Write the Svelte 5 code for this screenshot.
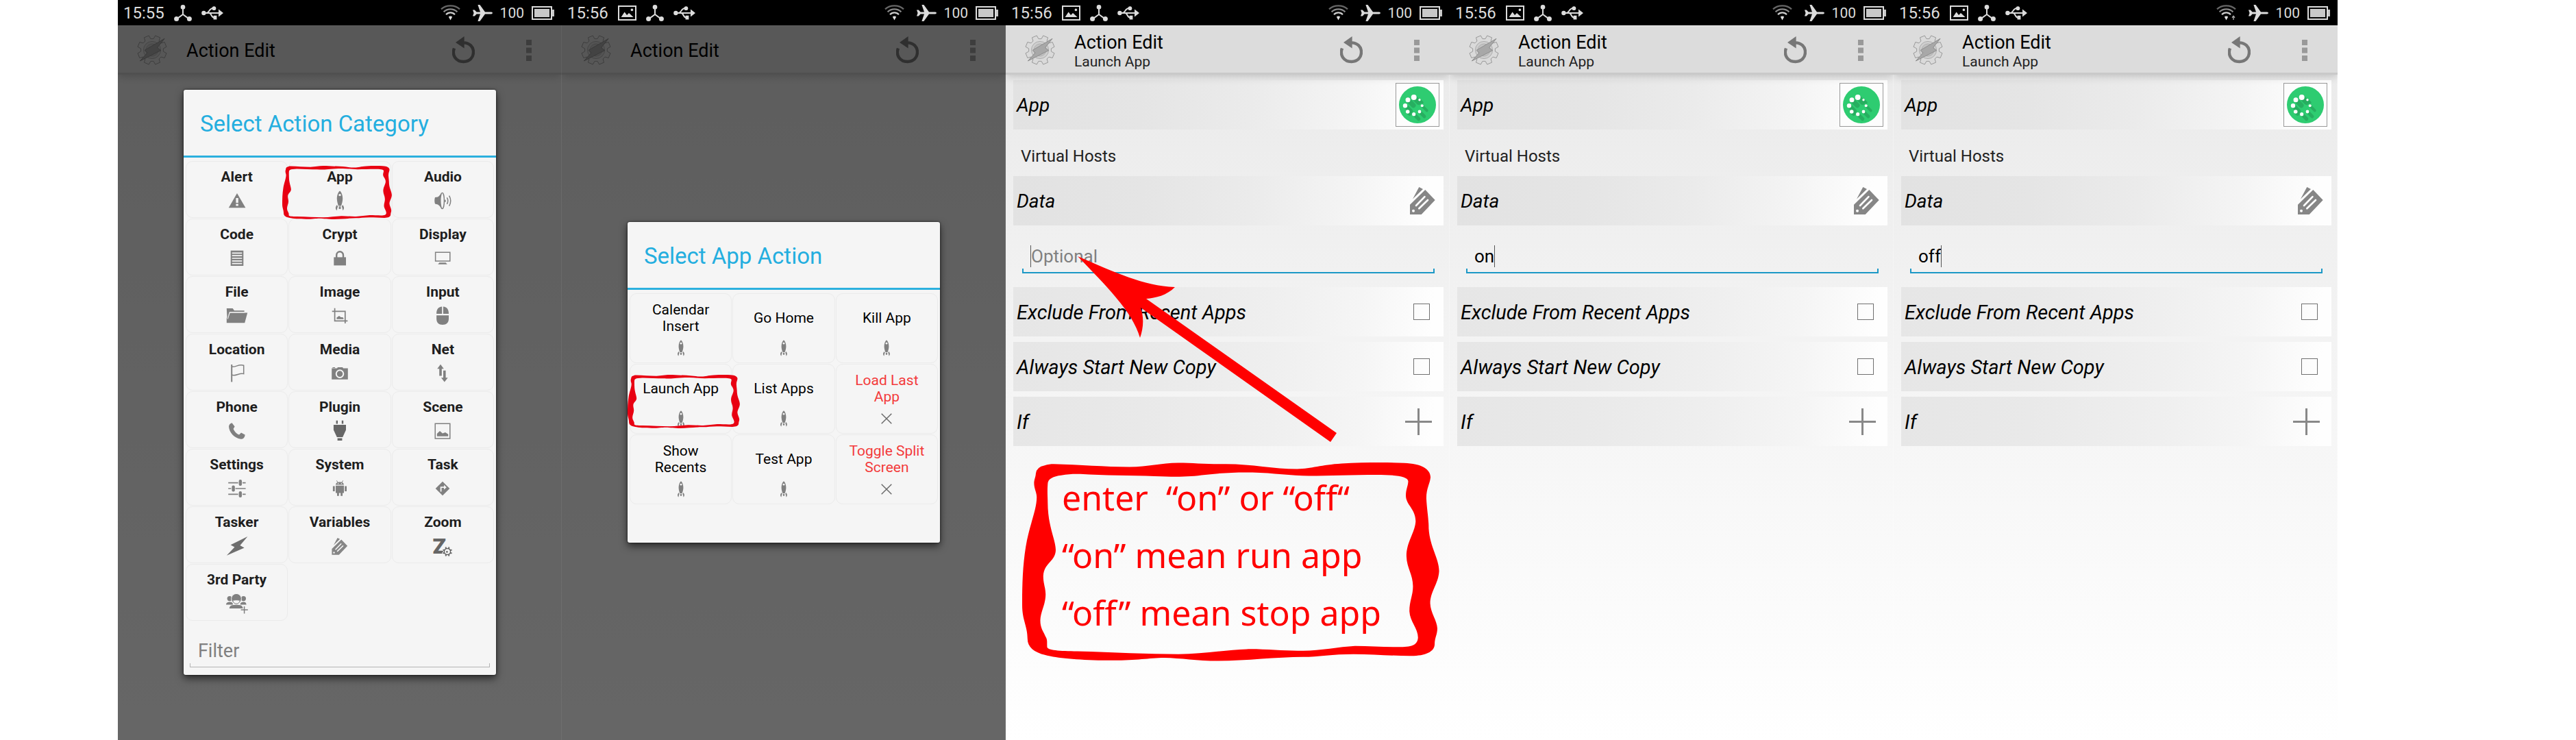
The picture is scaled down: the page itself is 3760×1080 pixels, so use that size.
<script>
  const categories = [
    ['Alert', 'alert'], ['App', 'rocket'], ['Audio', 'audio'],
    ['Code', 'code'], ['Crypt', 'lock'], ['Display', 'display'],
    ['File', 'folder'], ['Image', 'crop'], ['Input', 'mouse'],
    ['Location', 'flag'], ['Media', 'camera'], ['Net', 'net'],
    ['Phone', 'phone'], ['Plugin', 'plug'], ['Scene', 'scene'],
    ['Settings', 'sliders'], ['System', 'android'], ['Task', 'task'],
    ['Tasker', 'bolt'], ['Variables', 'tag'], ['Zoom', 'zoom'],
    ['3rd Party', 'people']
  ].map(([label, icon]) => ({ label, icon, marked: label === 'App' }));

  const appActions = [
    { label: 'Calendar Insert', icon: 'rocket' },
    { label: 'Go Home', icon: 'rocket' },
    { label: 'Kill App', icon: 'rocket' },
    { label: 'Launch App', icon: 'rocket', marked: true },
    { label: 'List Apps', icon: 'rocket' },
    { label: 'Load Last App', icon: 'cross', unavailable: true },
    { label: 'Show Recents', icon: 'rocket' },
    { label: 'Test App', icon: 'rocket' },
    { label: 'Toggle Split Screen', icon: 'cross', unavailable: true }
  ];

  const editors = [
    { id: 'empty', value: '', note: true },
    { id: 'on', value: 'on' },
    { id: 'off', value: 'off', uploading: true }
  ];

  const loaderDots = [
    [21.7, 16, 4, 7], [13, 19.7, 3.5, 8], [9, 28.3, 3.2, 8], [12.7, 37, 2.8, 3],
    [21.7, 40.7, 2.6, 7], [30, 37, 2.4, 7], [33.7, 28.3, 2, 7], [30, 19.7, 1.7, 4]
  ];

  function gearPath(cx, cy, outer, inner, teeth) {
    const step = (Math.PI * 2) / teeth;
    const pts = [];
    for (let i = 0; i < teeth; i++) {
      const a = i * step + step / 2;
      for (const [r, o] of [[inner, -0.34], [outer, -0.22], [outer, 0.22], [inner, 0.34]]) {
        const t = a + o * step;
        pts.push(`${(cx + r * Math.cos(t)).toFixed(2)} ${(cy + r * Math.sin(t)).toFixed(2)}`);
      }
    }
    return `M${pts.join('L')}Z`;
  }
  const bigGear = gearPath(22, 22, 21.5, 16.5, 8);
  const smallGear = gearPath(23, 24, 7.6, 5.6, 8);

  const scribblePath =
    'M120 760Q122 735 150 729C160 725 170 724 180 724C270 726 350 735 435 735C500 733 540 720 600 719C650 719 700 725 760 724C850 724 920 743 1000 743C1050 741 1080 727 1150 722C1220 718 1300 717 1360 720C1420 722 1450 745 1449 775C1447 800 1435 815 1435 855C1437 900 1443 930 1443 970C1447 1040 1478 1085 1478 1132C1476 1180 1448 1210 1448 1255C1449 1290 1471 1320 1472 1350C1472 1375 1463 1385 1463 1410C1463 1440 1430 1456 1380 1455C1320 1454 1260 1449 1190 1448C1120 1448 1070 1458 1020 1459C930 1459 830 1474 735 1474C660 1474 610 1463 552 1462C500 1463 460 1472 380 1472C290 1472 210 1466 170 1456C120 1446 92 1425 92 1390C92 1340 74 1320 74 1260C74 1180 76 1110 86 1040C97 960 123 900 123 850C123 830 114 820 114 795C115 780 119 775 120 760Z' +
    'M160 800C160 780 180 770 205 767C230 762 250 761 270 762C350 768 440 768 520 770C600 774 640 772 690 765C740 758 790 755 850 756C920 758 980 769 1040 769C1110 769 1180 765 1270 765C1320 765 1374 768 1374 790C1373 810 1366 820 1366 845C1367 880 1399 895 1399 942C1397 985 1368 1020 1368 1075C1369 1120 1390 1145 1390 1190C1390 1225 1378 1245 1378 1285C1380 1325 1407 1350 1407 1385C1405 1415 1385 1421 1340 1421C1290 1421 1245 1417 1195 1417C1140 1420 1080 1435 1020 1435C960 1437 900 1428 830 1429C760 1431 680 1448 600 1448C500 1448 380 1441 260 1437C200 1436 158 1434 158 1420C157 1400 160 1395 152 1380C145 1360 135 1350 135 1320C136 1285 153 1260 153 1220C152 1190 145 1180 145 1150C147 1100 187 1095 187 1050C186 1010 160 960 160 870C160 850 158 830 160 800Z';
</script>

{#snippet scribble()}
  <svg class="scribble" viewBox="74 718 1405 757" preserveAspectRatio="none" aria-hidden="true">
    <path d={scribblePath} fill-rule="evenodd" fill="currentColor" />
  </svg>
{/snippet}

{#snippet tagShape(light)}
  <path d="M0 25.7L22.3 4L36.7 19L16.7 40H0ZM4 17.5L13.3 0L19 3Z" fill="#868686" />
  <circle cx="5" cy="34.7" r="2" fill={light} />
  <path d="M9 27L21.5 14.2M13.3 31.3L26 19" stroke={light} stroke-width="2.6" stroke-linecap="round" />
{/snippet}

{#snippet glyph(name)}
  <svg class="glyph" viewBox="0 0 32 32" aria-hidden="true" fill="#808080" stroke="none">
    {#if name === 'alert'}
      <path d="M16 5L28.4 26.2H3.8Z" />
      <path d="M14.4 12h3.4v7h-3.4zM14.4 20.6h3.4v3h-3.4z" fill="#f5f5f5" />
    {:else if name === 'rocket'}
      <path d="M16 1.6C19 4 20.3 9 20.2 13.5C20 18 18.8 21 18 23.4H14C13.2 21 12 18 11.8 13.5C11.7 9 13 4 16 1.6Z" />
      <circle cx="16" cy="7.6" r="1.7" fill="#f5f5f5" />
      <path d="M14.6 24.2h2.8v3.8h-2.8zM11.9 22L13.2 24.4C12.3 26 12 28 11.6 30.2C9.6 28 9 25.4 11.9 22ZM20.1 22L18.8 24.4C19.7 26 20 28 20.4 30.2C22.4 28 23 25.4 20.1 22Z" />
    {:else if name === 'audio'}
      <path d="M9 10.5C11.5 9 12.8 7 14 4.6C12.6 11 12.6 21 14 27.4C12.8 25 11.5 23 9 21.5L5 20.6C4 18 4 13.4 5 11Z" />
      <ellipse cx="15.6" cy="16" rx="2.8" ry="11.6" fill="none" stroke="#808080" stroke-width="1.4" />
      <path d="M19.6 14.6q1 1.6 0 3.2M22.4 11.4q2.8 4.8 0 9.4M25.6 8.6q4.4 7.6 0 15" fill="none" stroke="#808080" stroke-width="1.5" />
    {:else if name === 'code'}
      <path d="M6.7 4.7h18.6v22.3H6.7z" />
      <path d="M8.7 8.4h14.6M8.7 12.2h14.6M8.7 16h14.6M8.7 19.8h14.6M8.7 23.6h14.6" stroke="#f5f5f5" stroke-width="1.7" />
    {:else if name === 'lock'}
      <path d="M7.3 14.4H25v12H7.3z" />
      <path d="M11.2 15V11.4C11.2 4.6 21 4.6 21 11.4V15" fill="none" stroke="#808080" stroke-width="2.4" />
    {:else if name === 'display'}
      <path d="M5.6 7.3h21.2v12.6H5.6z" fill="none" stroke="#808080" stroke-width="1.5" />
      <path d="M11.4 22.2H20.6L22.8 24.7H9.3Z" />
    {:else if name === 'folder'}
      <path d="M.8 5H9.6L12 8.2H26.6V10.2H5L1.6 20Z" />
      <path d="M.8 26.3V20L5.6 11.4H31.2L27.2 26.3Z" />
      <path d="M2.4 20.6L5.4 10.9H27" fill="none" stroke="#f5f5f5" stroke-width="1" />
    {:else if name === 'crop'}
      <path d="M4.7 9.4H23.8V27M8.6 4.7V23.3H27.4" fill="none" stroke="#808080" stroke-width="1.7" />
      <path d="M11.4 20.8V18.6L15 16L17.6 18H20L21.4 19.2V20.8Z" />
    {:else if name === 'mouse'}
      <path d="M15.2 2.4V13H7.1C7.1 6.6 9.6 2.8 15.2 2.4ZM16.9 2.4V13H25C25 6.6 22.4 2.8 16.9 2.4ZM7.1 15.2H25V20C25 26 21.6 29 16 29C10.4 29 7.1 26 7.1 20Z" />
    {:else if name === 'flag'}
      <path d="M8.2 3V28.4" stroke="#808080" stroke-width="2" />
      <path d="M8.4 6.2C14 7.4 18 1.8 25.7 4.2V16.6C19 14.8 15 20.4 8.4 18.2" fill="none" stroke="#808080" stroke-width="1.5" />
    {:else if name === 'camera'}
      <path d="M4.2 8.6H12L13 6.9H20L21 8.6H27.8V24.7H4.2ZM5.4 6.9H9V7.9H5.4Z" />
      <circle cx="16" cy="16.6" r="5.3" fill="#808080" stroke="#f5f5f5" stroke-width="2" />
    {:else if name === 'net'}
      <path d="M13 2.8L17.8 9.2H14.8V19.6H11.2V9.2H8.2ZM18.8 28.6L13.9 22.2H17V11.8H20.6V22.2H23.7Z" />
    {:else if name === 'phone'}
      <path d="M8.6 4.2L12.6 9.6L10.6 13C12.2 17 15.4 20 19 21.6L22 18.4L27.6 21.4C27.4 25.6 24.6 28 21.4 27.8C12 26.4 4.6 18.6 4 9.6C4.2 7 6 4.6 8.6 4.2Z" />
    {:else if name === 'plug'}
      <path d="M10.6 .8h2.4v4.8h-2.4zM18.8 .8h2.4v4.8h-2.4zM6.9 7H25V14.6L20.2 25H11.8L6.9 14.6ZM12.6 26.4H19.4V30H12.6Z" fill="#666" />
    {:else if name === 'scene'}
      <path d="M5.2 5.2h21.6v21.8H5.2z" fill="none" stroke="#808080" stroke-width="1.5" />
      <path d="M7.8 23.8V20L12 16L16 19.4L20 18L24.2 20.8V23.8Z" />
    {:else if name === 'sliders'}
      <path d="M3.2 7.6H17.6M24 7.6H28.6M3.2 16H7.4M13.6 16H28.6M3.2 24.4H17.6M24 24.4H28.6" stroke="#808080" stroke-width="1.7" />
      <rect x="18.6" y="3" width="4.4" height="9" rx="2" />
      <rect x="8.4" y="11.4" width="4.4" height="9" rx="2" />
      <rect x="18.6" y="20" width="4.4" height="9" rx="2" />
    {:else if name === 'android'}
      <path d="M10 10.6C10.2 7.6 12.6 6.4 16 6.4C19.4 6.4 21.8 7.6 22 10.6ZM10 11.8H22V22.4H10ZM5.9 12.4h2.8v7.6H5.9zM23.2 12.4H26v7.6H23.2zM12 22h2.8v4.8H12zM17.2 22H20v4.8h-2.8z" />
      <path d="M11.4 4.4L13 7M20.6 4.4L19 7" stroke="#808080" stroke-width="1" />
      <circle cx="13.6" cy="8.8" r=".8" fill="#f5f5f5" />
      <circle cx="18.4" cy="8.8" r=".8" fill="#f5f5f5" />
    {:else if name === 'task'}
      <path d="M16 5.8L26.3 16L16 26.2L5.7 16Z" />
      <path d="M13.6 20.6V14.2H19" fill="none" stroke="#f5f5f5" stroke-width="1.8" />
      <path d="M18 10.8L21.8 14.2L18 17.6Z" fill="#f5f5f5" />
    {:else if name === 'bolt'}
      <path d="M31.4 2L20.4 15L26.6 18.4L.8 29.8L12.4 17.6L6.6 14.2Z" fill="#6e6e6e" />
    {:else if name === 'tag'}
      <g transform="translate(4.4 4) scale(.62)">{@render tagShape('#f5f5f5')}</g>
    {:else if name === 'zoom'}
      <text class="zee" x="1.6" y="27">Z</text>
      <path d={smallGear} fill="#666" stroke="#f5f5f5" stroke-width="1" />
      <circle cx="23" cy="24" r="3.8" fill="#f5f5f5" />
      <circle cx="22.4" cy="24.4" r="1.3" fill="#666" />
    {:else if name === 'people'}
      <circle cx="5.2" cy="8.6" r="3.6" />
      <circle cx="25.4" cy="8.6" r="3.6" />
      <path d="M0 17.4C.2 14.4 2.4 13.4 5.6 13.4C8.8 13.4 10 15 10 17.4ZM20.6 17.4C20.8 14.4 22.4 13.4 25.6 13.4C28.4 13.4 29.4 15 29.6 17.4Z" />
      <circle cx="15" cy="8.8" r="7.4" stroke="#f5f5f5" stroke-width="1" />
      <path d="M9.6 11.6C11 10.4 19 10.4 20.4 11.6C19.6 15 17 16.2 15 16.2C13 16.2 10.6 15 9.6 11.6Z" fill="#f5f5f5" stroke="#808080" stroke-width="1" />
      <path d="M4.8 23C5 19 8 17.8 15 17.8C21.6 17.8 24 19 24.6 23Z" />
      <path d="M26.6 19.6V30.6M21.2 25.1H32" stroke="#f5f5f5" stroke-width="3.4" />
      <path d="M26.6 20V30.4M21.6 25.1H31.8" stroke="#808080" stroke-width="1.5" />
    {:else if name === 'cross'}
      <path d="M7 7L25 25M25 7L7 25" stroke="#6a6a6a" stroke-width="1.8" />
    {/if}
  </svg>
{/snippet}

{#snippet statusBar(time, picture, uploading)}
  <div class="status">
    <time>{time}</time>
    {#if picture}
      <svg width="27" height="22" viewBox="0 0 27 22" aria-hidden="true">
        <path d="M1 1H26V21H1Z" fill="none" stroke="#dcdcdc" stroke-width="2" />
        <path d="M4.6 17L9.6 9.4L13 14L16 11L22.6 17Z" fill="#dcdcdc" />
        <circle cx="20.4" cy="6.4" r="1.8" fill="#dcdcdc" />
      </svg>
    {/if}
    <svg width="26" height="24" viewBox="0 0 26 24" aria-hidden="true" fill="#dcdcdc">
      <path d="M13 4V14M13 14L4 20.6M13 14L22 20.6" stroke="#dcdcdc" stroke-width="2" />
      <circle cx="13" cy="3.4" r="3.3" /><circle cx="3.6" cy="20.4" r="3.5" /><circle cx="22.4" cy="20.4" r="3.5" />
    </svg>
    <svg width="32" height="20" viewBox="0 0 32 20" aria-hidden="true" fill="#dcdcdc">
      <path d="M3 10H26M7 10C12 10 10.6 2.8 18 2.8M11 10C15.4 10 13.4 17 20 17" fill="none" stroke="#dcdcdc" stroke-width="2" />
      <circle cx="3.4" cy="10" r="3.2" /><circle cx="18.4" cy="3.2" r="2.9" />
      <path d="M25 4.6L32 10L25 15.4ZM17.6 13.8h4.8v5.8h-4.8z" />
    </svg>
    <span class="spacer"></span>
    <svg class="wifi" width="29" height="23" viewBox="0 0 29 23" aria-hidden="true" fill="none" stroke-width="2.2">
      <path d="M1 6.4C8 -.4 21 -.4 28 6.4" stroke="#666" />
      <path d="M4.6 10.4C10 5 19 5 24.4 10.4" stroke="#888" />
      <path d="M8 14.2C11.6 10.4 17.4 10.4 21 14.2" stroke="#ccc" />
      <path d="M11.8 17.4Q14.5 15.4 17.2 17.4L14.5 22.4Z" fill="#e0e0e0" />
      {#if uploading}<path d="M25 22V17M23 18.8L25 16.4L27 18.8" stroke="#aaa" stroke-width="1.4" />{/if}
    </svg>
    <svg class="plane" width="30" height="24" viewBox="0 0 30 24" aria-hidden="true">
      <path d="M28 10.6C30.6 11 30.6 13 28 13.4H19L11.4 24H8.4L12 13.4H6.6L3.8 16.6H1L2.6 12L1 7.4H3.8L6.6 10.6H12L8.4 0H11.4L19 10.6Z" fill="#dcdcdc" />
    </svg>
    <span class="level">100</span>
    <svg width="33" height="20" viewBox="0 0 33 20" aria-hidden="true" fill="#c8c8c8">
      <path d="M1 1H29V19H1Z" fill="none" stroke="#dcdcdc" stroke-width="2" />
      <path d="M4 4H26V16H4ZM30 5H33V15H30Z" />
    </svg>
  </div>
{/snippet}

{#snippet actionBar(subtitle)}
  <header class="bar">
    <svg class="logo" viewBox="0 0 44 44" aria-hidden="true">
      <path d={bigGear} fill="#dadada" stroke="#999" stroke-width="1" />
      <circle cx="22" cy="22" r="12.6" fill="#cfcfcf" stroke="#adadad" />
      <circle cx="22" cy="22" r="9" fill="#c2c2c2" stroke="#b0b0b0" />
      <path d="M40 5.4L29.6 18.6L34.6 22.6L4.4 38L15 26L11 22.4Z" fill="#a8a8a8" stroke="#8d8d8d" stroke-width="1" />
    </svg>
    <div class="titles">
      <h1>Action Edit</h1>
      {#if subtitle}<p>{subtitle}</p>{/if}
    </div>
    <button class="bare" aria-label="Revert">
      <svg width="33" height="40" viewBox="0 0 33 40" aria-hidden="true">
        <path d="M3 17.5C-1 28 6 37 16.6 37C26 37 31 30.6 31 23C31 15.4 25.6 9.6 16.6 9.4" fill="none" stroke="#777" stroke-width="4.4" />
        <path d="M17.6 0V17.6L5 9Z" fill="#777" />
      </svg>
    </button>
    <button class="bare" aria-label="More options">
      <svg width="8" height="31" viewBox="0 0 8 31" aria-hidden="true">
        <path d="M0 0H8V8H0ZM0 11.5H8V19.5H0ZM0 23H8V31H0Z" fill="#999" />
      </svg>
    </button>
  </header>
{/snippet}

{#snippet cell(item)}
  <button class="cell" class:unavailable={item.unavailable}>
    <span class="label">{item.label}</span>
    {@render glyph(item.icon)}
    {#if item.marked}{@render scribble()}{/if}
  </button>
{/snippet}

<main class="board">
  <section class="screen">
    {@render statusBar('15:55', false)}
    <div class="page">
      {@render actionBar('')}
      <div class="scrim">
        <div class="dialog categories" role="dialog" aria-labelledby="cat-title">
          <h2 id="cat-title">Select Action Category</h2>
          <div class="grid">
            {#each categories as item}{@render cell(item)}{/each}
          </div>
          <div class="filter field">
            <input type="text" placeholder="Filter" aria-label="Filter" />
          </div>
        </div>
      </div>
    </div>
  </section>

  <section class="screen">
    {@render statusBar('15:56', true)}
    <div class="page">
      {@render actionBar('')}
      <div class="scrim">
        <div class="dialog actions" role="dialog" aria-labelledby="act-title">
          <h2 id="act-title">Select App Action</h2>
          <div class="grid">
            {#each appActions as item}{@render cell(item)}{/each}
          </div>
        </div>
      </div>
    </div>
  </section>

  {#each editors as ed}
    <section class="screen">
      {@render statusBar('15:56', true, ed.uploading)}
      <div class="page">
        {@render actionBar('Launch App')}
        <form class="form">
          <div class="row">
            <h3>App</h3>
            <button type="button" class="pick" aria-label="Virtual Hosts">
              <svg viewBox="0 0 54 54" aria-hidden="true">
                <circle cx="27" cy="27" r="27" fill="#2ecc71" />
                {#each loaderDots as [x, y, r, len]}
                  <path d="M{x} {y}l{len} {len}" stroke="#27ae60" stroke-width={r * 2} stroke-linecap="round" />
                {/each}
                {#each loaderDots as [x, y, r]}
                  <circle cx={x} cy={y} {r} fill="#fff" />
                {/each}
              </svg>
            </button>
          </div>
          <p class="chosen">Virtual Hosts</p>
          <div class="row">
            <h3><label for="data-{ed.id}">Data</label></h3>
            <button type="button" class="bare tag" aria-label="Insert variable">
              <svg width="37" height="40" viewBox="0 0 37 40" aria-hidden="true">{@render tagShape('#fff')}</svg>
            </button>
          </div>
          <div class="data field" class:blank={!ed.value}>
            <input id="data-{ed.id}" type="text" placeholder="Optional" value={ed.value} />
            <span class="caret"></span>
          </div>
          <div class="row tilt">
            <h3><label for="exclude-{ed.id}">Exclude From Recent Apps</label></h3>
            <input id="exclude-{ed.id}" type="checkbox" />
          </div>
          <div class="row tilt">
            <h3><label for="copy-{ed.id}">Always Start New Copy</label></h3>
            <input id="copy-{ed.id}" type="checkbox" />
          </div>
          <div class="row tilt">
            <h3>If</h3>
            <button type="button" class="bare plus" aria-label="Add condition">
              <svg width="39" height="39" viewBox="0 0 39 39" aria-hidden="true">
                <path d="M19.5 0V39M0 19.5H39" stroke="#888" stroke-width="3" />
              </svg>
            </button>
          </div>
        </form>
      </div>
      {#if ed.note}
        <svg class="arrow" viewBox="0 0 380 274" aria-hidden="true">
          <path d="M0 0C56 24 95 43 142 45C130 57 114 61 100 62L378 258L369 271L92 75C97 90 96 105 91 119C80 80 40 42 0 0Z" fill="#f00" />
        </svg>
        <aside class="note">
          {@render scribble()}
          <p>enter  “on” or “off“</p>
          <p>“on” mean run app</p>
          <p>“off” mean stop app</p>
        </aside>
      {/if}
    </section>
  {/each}
</main>

<style>
  :global(body) {
    margin: 0;
    background: #fff;
  }
  h1, h2, h3, p {
    margin: 0;
    font-weight: 400;
  }
  button, input {
    font: inherit;
    color: inherit;
    margin: 0;
    padding: 0;
    border: 0;
    background: none;
    border-radius: 0;
  }
  svg {
    display: block;
    flex: none;
  }
  .board {
    display: grid;
    grid-template-columns: repeat(5, minmax(0, 648fr));
    min-height: 100vh;
    padding: 0 9.255% 0 4.575%;
    box-sizing: border-box;
    font-family: Roboto, "Noto Sans", sans-serif;
    color: #000;
  }
  .screen {
    position: relative;
    display: flex;
    flex-direction: column;
  }
  .status {
    display: flex;
    align-items: center;
    gap: 14px;
    height: 37px;
    padding: 0 11px 0 8px;
    background: #000;
    color: #dcdcdc;
    box-sizing: border-box;
  }
  .status time {
    font-size: 24px;
    line-height: 36px;
  }
  .spacer {
    flex: 1;
  }
  .plane {
    margin-left: 3px;
  }
  .level {
    font-size: 21px;
    margin: 0 -3px;
  }
  .page {
    position: relative;
    flex: 1;
    background: linear-gradient(#e9e9e9, #f0f0f0 30%, #fff);
    box-shadow: inset -1px 0 rgba(255, 255, 255, 0.3);
  }
  .bar {
    display: flex;
    align-items: center;
    height: 72px;
    padding: 0 44px 0 28px;
    box-sizing: border-box;
    background: #dcdcdc;
    box-shadow: inset 0 1px #eee, inset 0 -3px #c9c9c9, 0 2px 12px rgba(0, 0, 0, 0.2);
    position: relative;
    clip-path: inset(0 0 -20px 0);
  }
  .logo {
    width: 44px;
    height: 44px;
  }
  .titles {
    flex: 1;
    padding: 2px 0 0 28px;
  }
  .titles h1 {
    font-size: 27px;
    line-height: 32px;
  }
  .titles p {
    font-size: 21px;
    line-height: 24px;
    color: #222;
  }
  .bare + .bare {
    margin-left: 75px;
  }
  .scrim {
    position: absolute;
    inset: 0;
    display: flex;
    align-items: center;
    justify-content: center;
    padding-bottom: 2px;
    background: rgba(0, 0, 0, 0.6);
    box-shadow: inset -1px 0 rgba(255, 255, 255, 0.06);
  }
  .dialog {
    width: 70.4%;
    background: #f5f5f5;
    border-radius: 3px;
    box-shadow: 0 5px 12px rgba(0, 0, 0, 0.6), 0 0 3px rgba(0, 0, 0, 0.7);
  }
  .dialog h2 {
    padding: 28px 24px 25px;
    font-size: 33px;
    line-height: 43px;
    color: #24aedf;
    border-bottom: 3px solid #2cb0de;
  }
  .grid {
    display: grid;
    grid-template-columns: repeat(3, minmax(0, 1fr));
    gap: 1px;
    padding: 5px 3px 0;
  }
  .cell {
    position: relative;
    display: flex;
    flex-direction: column;
    align-items: center;
    border: 1px solid #ebebeb;
    border-radius: 10px;
    box-sizing: border-box;
    font-size: 21px;
  }
  .categories .cell {
    height: 83px;
    padding-top: 10px;
    gap: 6px;
    font-weight: 700;
    line-height: 25px;
    color: #1e1e1e;
  }
  .actions .grid {
    padding-bottom: 56px;
  }
  .actions .cell {
    height: 102px;
    padding: 11px 14px 0;
    gap: 7px;
    line-height: 24px;
  }
  .actions .label {
    display: flex;
    align-items: center;
    height: 48px;
  }
  .unavailable {
    color: #f33b3b;
  }
  .glyph {
    width: 32px;
    height: 32px;
    overflow: visible;
  }
  .actions .glyph {
    width: 26px;
    height: 26px;
  }
  .zee {
    font: 900 32px Roboto, sans-serif;
    fill: #666;
  }
  .scribble {
    position: absolute;
    color: #e80012;
    z-index: 1;
  }
  .cell .scribble {
    left: -10px;
    top: 6px;
    width: 160px;
    height: 78px;
  }
  .actions .cell .scribble {
    left: -4px;
    top: 15px;
    width: 164px;
  }
  .field {
    position: relative;
    display: flex;
  }
  .field::after {
    content: "";
    position: absolute;
    inset: auto 0 0;
    height: 5px;
    border: 1px solid #b4b4b4;
    border-top: 0;
    pointer-events: none;
  }
  .field input {
    outline: 0;
  }
  .field input::placeholder {
    color: #808080;
    opacity: 1;
  }
  .filter {
    margin: 20px 9px 0;
    height: 48px;
  }
  .categories {
    padding-bottom: 11px;
  }
  .filter input {
    width: 100%;
    padding: 0 12px;
    font-size: 27px;
  }
  .form {
    padding: 8px 9px 0 11px;
  }
  .row {
    display: flex;
    align-items: center;
    justify-content: space-between;
    height: 72px;
    padding-left: 5px;
    background: linear-gradient(96deg, #e2e2e2, #e5e5e5 30%, #ebebeb 55%, #f4f4f4 78%, #fefefe 96%);
  }
  .row.tilt {
    background: linear-gradient(97deg, #e6e6e6, #e9e9e9 30%, #efefef 60%, #f5f5f5 80%, #fefefe 97%);
  }
  .tilt + .tilt {
    margin-top: 8px;
  }
  .row h3 {
    padding-top: 1px;
    font-size: 28px;
    line-height: 34px;
    font-style: italic;
  }
  .tilt h3 {
    font-size: 29px;
  }
  .pick {
    display: flex;
    align-items: center;
    justify-content: center;
    width: 64px;
    height: 64px;
    margin-right: 6px;
    border: 1px solid #999;
    background: #fdfdfd;
    box-sizing: border-box;
  }
  .pick svg {
    width: 54px;
    height: 54px;
  }
  .chosen {
    padding: 25px 0 15px 11px;
    font-size: 24px;
    line-height: 28px;
    color: #222;
  }
  .tag {
    margin-right: 12px;
  }
  .plus {
    margin-right: 17px;
  }
  .row input {
    appearance: none;
    width: 24px;
    height: 24px;
    margin-right: 20px;
    border: 1px solid #707070;
  }
  .data {
    align-items: flex-end;
    height: 61px;
    margin: 0 13px 20px;
    padding: 0 12px 9px;
    font-size: 26px;
  }
  .data::after {
    height: 5px;
    border: 2px solid #1c98c6;
    border-top: 0;
  }
  .data input {
    field-sizing: content;
    height: 32px;
  }
  .caret {
    width: 1px;
    height: 32px;
    background: #555;
  }
  .blank .caret {
    order: -1;
  }
  .arrow {
    position: absolute;
    left: 105px;
    top: 374px;
    width: 380px;
    height: 274px;
  }
  .note {
    position: absolute;
    left: 24px;
    top: 675px;
    width: 609px;
    height: 290px;
    padding: 9px 0 0 58px;
    box-sizing: border-box;
    font: 50px "Noto Sans", sans-serif;
    line-height: 84px;
    color: #f00;
  }
  .note p {
    white-space: pre;
  }
  .note .scribble {
    inset: 0;
    width: 100%;
    height: 100%;
    color: #f00;
  }
</style>
